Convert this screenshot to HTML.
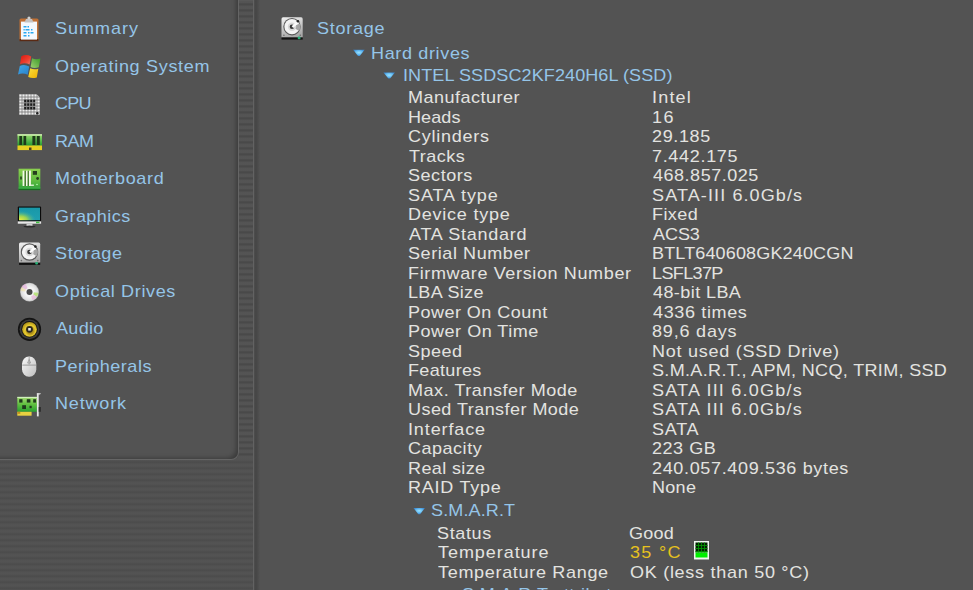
<!DOCTYPE html>
<html><head><meta charset="utf-8">
<style>
html,body{margin:0;padding:0}
body{width:973px;height:590px;overflow:hidden;position:relative;
 background:repeating-linear-gradient(to bottom,#4b4b4b 0px,#4e4e4e 1px,#525252 2px,#535353 4px,#505050 5px,#4c4c4c 6px);
 font-family:"Liberation Sans",sans-serif;}
.a{position:absolute}
#strip{left:238px;top:0;width:16px;height:459px;background:repeating-linear-gradient(to bottom,#535353 0px,#545454 1px,#545454 2px,#535353 3px,#4c4c4c 3.5px,#494949 4.5px,#4e4e4e 5.5px,#535353 6px)}
#stripTop{left:238px;top:0;width:16px;height:1px;background:#585858}
#panelL{left:-20px;top:-20px;width:259px;height:480px;background:#656565;border-radius:0 8px 8px 0}
#panelIn{left:-20px;top:-20px;width:258px;height:479px;background:#535353;border-radius:0 8px 7px 0;box-shadow:inset -4px -3px 4px -2px rgba(0,0,0,0.28)}
#vline{left:253px;top:0;width:1px;height:590px;background:#626262}
#content{left:254px;top:0;width:719px;height:590px;background:#535353}
#shade{left:254px;top:0;width:6px;height:590px;background:linear-gradient(to right,#4f4f4f,#454545 30%,#4a4a4a 60%,#535353)}
.t{position:absolute;white-space:nowrap;font-size:17px;line-height:20px;transform-origin:0 0;transform:scaleX(1.06)}
.b{color:#95c5e8}
.w{color:#e3e3e0}
.y{color:#e6c21e}
</style></head><body>
<div class="a" id="strip"></div>
<div class="a" id="stripTop"></div>
<div class="a" id="panelL"></div>
<div class="a" id="panelIn"></div>
<div class="a" id="vline"></div>
<div class="a" id="content"></div>
<div class="a" id="shade"></div>

<svg class="a" style="left:0;top:0" width="973" height="590" viewBox="0 0 973 590">
<defs>
 <linearGradient id="gSilver" x1="0" y1="0" x2="0" y2="1"><stop offset="0" stop-color="#f4f4f4"/><stop offset="1" stop-color="#9a9a9a"/></linearGradient>
 <linearGradient id="gGreen" x1="0" y1="0" x2="0" y2="1"><stop offset="0" stop-color="#9fe070"/><stop offset="1" stop-color="#209a30"/></linearGradient>
 <linearGradient id="gScreen" x1="0" y1="1" x2="1" y2="0"><stop offset="0" stop-color="#e8e830"/><stop offset="0.35" stop-color="#60c060"/><stop offset="0.6" stop-color="#109898"/><stop offset="1" stop-color="#1878a8"/></linearGradient>
 <radialGradient id="gDisc" cx="0.5" cy="0.5" r="0.5"><stop offset="0.3" stop-color="#ffffff"/><stop offset="1" stop-color="#dadada"/></radialGradient>
 <linearGradient id="gMouse" x1="0" y1="0" x2="1" y2="1"><stop offset="0" stop-color="#fafafa"/><stop offset="1" stop-color="#bdbdbd"/></linearGradient>
 <radialGradient id="gYel" cx="0.55" cy="0.6" r="0.6"><stop offset="0.35" stop-color="#b09018"/><stop offset="0.6" stop-color="#e8cc30"/><stop offset="1" stop-color="#a88c18"/></radialGradient>
 <pattern id="pChk" width="2" height="2" patternUnits="userSpaceOnUse"><rect width="2" height="2" fill="#9c9c9c"/><rect width="1" height="1" fill="#f0f0f0"/><rect x="1" y="1" width="1" height="1" fill="#f0f0f0"/></pattern>
 <linearGradient id="gBox" x1="0" y1="0" x2="0.3" y2="1"><stop offset="0" stop-color="#f2f2f2"/><stop offset="0.6" stop-color="#c4c4c4"/><stop offset="1" stop-color="#a8a8a8"/></linearGradient>
 <g id="hdd">
  <rect x="0" y="0" width="21.2" height="21" rx="1.6" fill="url(#gBox)"/>
  <circle cx="10.5" cy="9.4" r="8.7" fill="#5a5a5a"/>
  <circle cx="10.5" cy="9.4" r="7.6" fill="#f4f4f4"/>
  <path d="M10.5,9.4 L18.3,6.2 A8.2,8.2 0 0 1 17.6,13.6 Z" fill="#a4a4a4"/>
  <circle cx="10.5" cy="9.4" r="4.2" fill="#d8d8d8"/>
  <circle cx="10.5" cy="9.4" r="2.3" fill="#383838"/>
  <path d="M11,9.8 L16.4,4.6" stroke="#fcfcfc" stroke-width="2.4"/>
  <circle cx="16.4" cy="4" r="1.3" fill="#262626"/>
  <circle cx="2.4" cy="18" r="0.8" fill="#6a6a6a"/>
  <circle cx="18.8" cy="18" r="0.8" fill="#6a6a6a"/>
  <rect x="0" y="20" width="21.2" height="2.3" fill="#121212"/>
  <rect x="16.2" y="19.3" width="2.8" height="2.6" rx="1" fill="#28b078"/>
 </g>
</defs>

<!-- Summary clipboard -->
<rect x="19.5" y="18.5" width="19" height="22.5" rx="1.5" fill="#c07034"/>
<rect x="19.5" y="39" width="19" height="2.2" fill="#5a2a14"/>
<rect x="21" y="21.6" width="16" height="18" fill="#f4f8fc"/>
<path d="M24.5,22.5 L26,19 L32,19 L33.5,22.5 Z" fill="#c4c4c4"/>
<circle cx="29" cy="18" r="1.6" fill="#d0d0d0"/>
<g fill="#28a8f0">
 <rect x="23.5" y="26" width="3" height="1.5"/><rect x="27.5" y="26" width="1.5" height="1.5"/>
 <rect x="23.5" y="29" width="1.2" height="1.5"/><rect x="25.5" y="29" width="4" height="1.5"/><rect x="31" y="29" width="1.5" height="1.5"/>
 <rect x="23.5" y="32" width="3" height="1.5"/><rect x="28" y="32" width="1.5" height="1.5"/><rect x="30.5" y="32" width="3" height="1.5"/>
 <rect x="23.5" y="35" width="3" height="1.5"/><rect x="28" y="35" width="1.5" height="1.5"/>
</g>

<!-- OS windows flag -->
<defs>
<linearGradient id="gR" x1="0" y1="0" x2="1" y2="1"><stop offset="0" stop-color="#d81810"/><stop offset="0.6" stop-color="#f04030"/><stop offset="1" stop-color="#e88070"/></linearGradient>
<linearGradient id="gG" x1="1" y1="0" x2="0" y2="1"><stop offset="0" stop-color="#3a9a28"/><stop offset="1" stop-color="#9cd070"/></linearGradient>
<linearGradient id="gB" x1="0" y1="0" x2="1" y2="1"><stop offset="0" stop-color="#40a8e8"/><stop offset="1" stop-color="#2a80c8"/></linearGradient>
<linearGradient id="gY" x1="0" y1="0" x2="1" y2="1"><stop offset="0" stop-color="#f8e040"/><stop offset="1" stop-color="#f0b000"/></linearGradient>
</defs>
<path d="M21.3,56.2 Q26,53.6 31.2,56.4 L29.6,64.6 Q25,62.2 20,64.2 Z" fill="url(#gR)"/>
<path d="M32,58.2 Q36,60 40.4,58.4 L38.8,67.2 Q34.4,68.8 30.6,67 Z" fill="url(#gG)"/>
<path d="M19.8,65.9 Q24.5,63.8 29.2,66.6 L27.7,74.8 Q23,72.4 18,74.4 Z" fill="url(#gB)"/>
<path d="M30.2,68.3 Q34,70.1 38.3,68.8 L36.8,77.4 Q32.5,79 28.2,77 Z" fill="url(#gY)"/>
<!-- CPU -->
<defs><pattern id="pPin" x="19" y="94" width="3" height="3" patternUnits="userSpaceOnUse"><rect width="3" height="3" fill="#989898"/><circle cx="1.5" cy="1.5" r="1.05" fill="#eeeeee"/></pattern></defs>
<rect x="19" y="94" width="21" height="21" fill="url(#pPin)"/>
<rect x="23.6" y="99.2" width="11.8" height="10.8" fill="#8a8a8a"/>
<g fill="#1c1c1c">
<rect x="24.2" y="99.8" width="2" height="2.4"/><rect x="27.2" y="99.8" width="2" height="2.4"/><rect x="30.2" y="99.8" width="2" height="2.4"/><rect x="33.2" y="99.8" width="2" height="2.4"/>
<rect x="24.2" y="103.4" width="2" height="2.4"/><rect x="27.2" y="103.4" width="2" height="2.4"/><rect x="30.2" y="103.4" width="2" height="2.4"/><rect x="33.2" y="103.4" width="2" height="2.4"/>
<rect x="24.2" y="107" width="2" height="2.4"/><rect x="27.2" y="107" width="2" height="2.4"/><rect x="30.2" y="107" width="2" height="2.4"/><rect x="33.2" y="107" width="2" height="2.4"/>
</g>
<path d="M36.5,94 L40,94 L40,97.5 Z" fill="#505050"/>
<circle cx="37.3" cy="113.2" r="1.2" fill="#202020"/>
<!-- RAM -->
<rect x="17.5" y="134.3" width="24.5" height="11.5" fill="url(#gGreen)"/>
<rect x="17.5" y="134.3" width="24.5" height="1.2" fill="#d8f0c0"/>
<g fill="#1e3a1a"><rect x="19.3" y="136" width="2.8" height="9"/><rect x="23.5" y="136" width="2.7" height="9"/><rect x="32.4" y="136" width="3" height="9"/><rect x="36.8" y="136" width="3" height="9"/></g>
<rect x="17.5" y="145.5" width="24.5" height="4.6" fill="#e6d020"/>
<rect x="29" y="147.5" width="2.5" height="2.6" fill="#4a4020"/>

<!-- Motherboard -->
<defs><linearGradient id="gMB" x1="0" y1="0" x2="0" y2="1"><stop offset="0" stop-color="#8cd050"/><stop offset="0.55" stop-color="#60bc40"/><stop offset="1" stop-color="#28a038"/></linearGradient>
<linearGradient id="gScr" x1="0" y1="0" x2="0" y2="1"><stop offset="0" stop-color="#1898a8"/><stop offset="1" stop-color="#20a0b0"/></linearGradient>
<radialGradient id="gScrY" cx="0.05" cy="1" r="0.75"><stop offset="0" stop-color="#f0f040"/><stop offset="0.45" stop-color="#a8d848" stop-opacity="0.9"/><stop offset="1" stop-color="#40b0a0" stop-opacity="0"/></radialGradient></defs>
<rect x="18.6" y="168.7" width="21.7" height="21.4" fill="url(#gMB)"/>
<g fill="#f4fae8"><rect x="22.6" y="170.6" width="2" height="15.4"/><rect x="25.9" y="170.6" width="1.8" height="15.4"/><rect x="28.9" y="170.6" width="2" height="15.4"/></g>
<g fill="#3e6a2a" opacity="0.8"><rect x="24.6" y="171" width="1.3" height="15"/><rect x="27.7" y="171" width="1.2" height="15"/></g>
<rect x="30.9" y="184.6" width="3" height="1.2" fill="#f4fae8"/>
<rect x="32.8" y="171" width="4.2" height="3.8" fill="#243e1c"/>
<circle cx="37.6" cy="178.5" r="1.4" fill="#243e1c"/>
<rect x="20.2" y="176.5" width="1.6" height="3" fill="#243e1c"/>
<circle cx="37" cy="184.5" r="0.8" fill="#b8ffb0"/>
<rect x="18.6" y="187" width="21.7" height="1.1" fill="#40a848"/>
<rect x="18.6" y="189" width="21.7" height="1.1" fill="#186a20"/>

<!-- Graphics -->
<rect x="17.8" y="206.4" width="23.3" height="15.2" rx="1" fill="#0a0a0a"/>
<rect x="19" y="207.6" width="21" height="12.6" fill="url(#gScr)"/>
<rect x="19" y="207.6" width="21" height="12.6" fill="url(#gScrY)"/>
<rect x="17.8" y="221.4" width="23.3" height="2.3" fill="#e8e8e8"/>
<rect x="36" y="221.6" width="3.5" height="1.6" fill="#40c040"/>
<rect x="26.5" y="223.7" width="6" height="2.4" fill="#d0d0d0"/>
<ellipse cx="29.5" cy="226.6" rx="6" ry="1" fill="#202020" opacity="0.8"/>

<!-- Storage -->
<use href="#hdd" x="19" y="242.6"/>
<!-- Optical -->
<circle cx="29.5" cy="292.1" r="9.4" fill="#bcbcbc"/>
<circle cx="29.5" cy="292.1" r="8.8" fill="url(#gDisc)"/>
<path d="M29.5,292.1 L21.4,287 A8.8,8.8 0 0 1 25.5,283.8 Z" fill="#e6b0dc" opacity="0.7"/>
<path d="M29.5,292.1 L20.7,291 A8.8,8.8 0 0 1 21.4,287 Z" fill="#f0e0a0" opacity="0.6"/>
<path d="M29.5,292.1 L38.3,292.8 A8.8,8.8 0 0 1 36.8,296.8 Z" fill="#b4e070" opacity="0.85"/>
<path d="M29.5,292.1 L36.8,296.8 A8.8,8.8 0 0 1 32.5,300 Z" fill="#e8b0d8" opacity="0.7"/>
<circle cx="29.5" cy="292.1" r="4.4" fill="#f4f4f4"/>
<circle cx="29.5" cy="292.1" r="3" fill="#4a4a4a"/>

<!-- Audio -->
<circle cx="29.5" cy="329.3" r="11.6" fill="#141414"/>
<circle cx="29.5" cy="329.3" r="9.9" fill="#3c3c3c"/>
<circle cx="29.5" cy="329.3" r="8.2" fill="#121212"/>
<circle cx="29.5" cy="329.3" r="7.4" fill="url(#gYel)"/>
<circle cx="29.5" cy="329.3" r="3.4" fill="#2c2a20"/>
<rect x="28.2" y="328" width="2.6" height="2.6" fill="#e8e8e8"/>

<!-- Mouse -->
<rect x="22" y="356.5" width="14.3" height="20.3" rx="6.8" ry="7.6" fill="url(#gMouse)"/>
<rect x="22.3" y="364.6" width="13.7" height="1" fill="#9a9a9a"/>
<rect x="28.7" y="357" width="0.9" height="7.6" fill="#a0a0a0"/>
<path d="M27.6,363 L29.15,359.5 L30.7,363 Z" fill="none" stroke="#9a9a9a" stroke-width="0.8"/>

<!-- Network -->
<defs><linearGradient id="gNet" x1="0" y1="0" x2="0" y2="1"><stop offset="0" stop-color="#a8dc78"/><stop offset="0.5" stop-color="#60c040"/><stop offset="1" stop-color="#28a030"/></linearGradient></defs>
<rect x="17.3" y="396.9" width="19.6" height="14.9" fill="url(#gNet)"/>
<rect x="17.3" y="396.9" width="19.6" height="1" fill="#d8f0c8"/>
<g fill="#203a1c"><rect x="19.2" y="399.2" width="3.3" height="3.4"/><rect x="26.8" y="399.2" width="3.6" height="3.4"/><rect x="33.2" y="399.2" width="2.8" height="3.4"/><rect x="22.2" y="405.2" width="3.8" height="3.8"/><rect x="29.5" y="405.8" width="2.2" height="2.4"/></g>
<rect x="17.3" y="411.8" width="14.3" height="3.9" fill="#e8d040"/>
<rect x="17.3" y="411.8" width="3" height="2" fill="#c09020"/>
<rect x="36.9" y="393.3" width="1.8" height="23.1" fill="#e8e8e8"/>
<path d="M36.9,393.3 L41,393.3 L40,394.6 L36.9,394.6 Z" fill="#e0e0e0"/>
<rect x="38.7" y="407" width="2.2" height="4.8" fill="#2e2e2e"/>

<!-- header storage icon -->
<use href="#hdd" x="281.5" y="17.3"/>

<!-- triangles -->
<defs><radialGradient id="gTri" cx="0.5" cy="0.45" r="0.55"><stop offset="0" stop-color="#9ae4ff"/><stop offset="0.6" stop-color="#62b8f0"/><stop offset="1" stop-color="#3a88d0"/></radialGradient>
<path id="tri" d="M0,0.2 L11.4,0.2 L6.6,6.4 L4.8,6.4 Z"/></defs>
<use href="#tri" x="353.2" y="49.6" fill="url(#gTri)"/>
<use href="#tri" x="383.5" y="72.2" fill="url(#gTri)"/>
<use href="#tri" x="413.5" y="507.8" fill="url(#gTri)"/>
<!-- temp box -->
<rect x="694" y="541" width="15" height="18.5" fill="#f0f8f0"/>
<rect x="695.5" y="542.5" width="12" height="10" fill="#002000"/>
<g fill="#009000"><rect x="695.5" y="545" width="12" height="0.9"/><rect x="695.5" y="548" width="12" height="0.9"/><rect x="695.5" y="551" width="12" height="0.9"/><rect x="698" y="542.5" width="0.9" height="10"/><rect x="701" y="542.5" width="0.9" height="10"/><rect x="704" y="542.5" width="0.9" height="10"/></g>
<rect x="695.5" y="552.5" width="12" height="5" fill="#00f000"/>
</svg>
<div class="t b" style="left:54.96px;top:19.00px;letter-spacing:0.915px">Summary</div>
<div class="t b" style="left:55.00px;top:57.00px;letter-spacing:0.645px">Operating System</div>
<div class="t b" style="left:54.97px;top:94.00px;letter-spacing:-0.780px">CPU</div>
<div class="t b" style="left:54.64px;top:132.00px;letter-spacing:-0.513px">RAM</div>
<div class="t b" style="left:54.64px;top:169.00px;letter-spacing:0.611px">Motherboard</div>
<div class="t b" style="left:54.97px;top:207.00px;letter-spacing:0.414px">Graphics</div>
<div class="t b" style="left:54.96px;top:244.00px;letter-spacing:0.618px">Storage</div>
<div class="t b" style="left:55.00px;top:282.00px;letter-spacing:0.592px">Optical Drives</div>
<div class="t b" style="left:55.83px;top:319.00px;letter-spacing:0.307px">Audio</div>
<div class="t b" style="left:54.64px;top:357.00px;letter-spacing:0.502px">Peripherals</div>
<div class="t b" style="left:54.64px;top:394.00px;letter-spacing:0.780px">Network</div>
<div class="t b" style="left:317.06px;top:19.00px;letter-spacing:0.697px">Storage</div>
<div class="t b" style="left:371.34px;top:43.50px;letter-spacing:0.610px">Hard drives</div>
<div class="t b" style="left:402.96px;top:66.00px;letter-spacing:0.091px">INTEL SSDSC2KF240H6L (SSD)</div>
<div class="t w" style="left:407.64px;top:88.00px;letter-spacing:0.455px">Manufacturer</div>
<div class="t w" style="left:652.26px;top:88.00px;letter-spacing:1.127px">Intel</div>
<div class="t w" style="left:407.64px;top:107.50px;letter-spacing:0.098px">Heads</div>
<div class="t w" style="left:651.73px;top:107.50px;letter-spacing:1.333px">16</div>
<div class="t w" style="left:407.97px;top:127.00px;letter-spacing:0.693px">Cylinders</div>
<div class="t w" style="left:651.99px;top:127.00px;letter-spacing:0.598px">29.185</div>
<div class="t w" style="left:408.72px;top:146.50px;letter-spacing:0.467px">Tracks</div>
<div class="t w" style="left:651.99px;top:146.50px;letter-spacing:0.635px">7.442.175</div>
<div class="t w" style="left:407.96px;top:166.00px;letter-spacing:0.498px">Sectors</div>
<div class="t w" style="left:652.70px;top:166.00px;letter-spacing:0.479px">468.857.025</div>
<div class="t w" style="left:407.96px;top:185.50px;letter-spacing:0.863px">SATA type</div>
<div class="t w" style="left:651.96px;top:185.50px;letter-spacing:1.044px">SATA-III 6.0Gb/s</div>
<div class="t w" style="left:407.64px;top:205.00px;letter-spacing:0.715px">Device type</div>
<div class="t w" style="left:651.64px;top:205.00px;letter-spacing:0.394px">Fixed</div>
<div class="t w" style="left:408.83px;top:224.50px;letter-spacing:0.677px">ATA Standard</div>
<div class="t w" style="left:652.83px;top:224.50px;letter-spacing:-0.071px">ACS3</div>
<div class="t w" style="left:407.96px;top:244.00px;letter-spacing:0.535px">Serial Number</div>
<div class="t w" style="left:651.64px;top:244.00px;letter-spacing:0.135px">BTLT640608GK240CGN</div>
<div class="t w" style="left:407.64px;top:263.50px;letter-spacing:0.589px">Firmware Version Number</div>
<div class="t w" style="left:651.64px;top:263.50px;letter-spacing:-0.588px">LSFL37P</div>
<div class="t w" style="left:407.64px;top:283.00px;letter-spacing:0.310px">LBA Size</div>
<div class="t w" style="left:652.70px;top:283.00px;letter-spacing:0.388px">48-bit LBA</div>
<div class="t w" style="left:407.64px;top:302.50px;letter-spacing:0.433px">Power On Count</div>
<div class="t w" style="left:652.70px;top:302.50px;letter-spacing:0.599px">4336 times</div>
<div class="t w" style="left:407.64px;top:322.00px;letter-spacing:0.479px">Power On Time</div>
<div class="t w" style="left:652.00px;top:322.00px;letter-spacing:0.763px">89,6 days</div>
<div class="t w" style="left:407.96px;top:341.50px;letter-spacing:0.448px">Speed</div>
<div class="t w" style="left:651.64px;top:341.50px;letter-spacing:0.689px">Not used (SSD Drive)</div>
<div class="t w" style="left:407.64px;top:361.00px;letter-spacing:0.305px">Features</div>
<div class="t w" style="left:651.96px;top:361.00px;letter-spacing:0.310px">S.M.A.R.T., APM, NCQ, TRIM, SSD</div>
<div class="t w" style="left:407.64px;top:380.50px;letter-spacing:0.508px">Max. Transfer Mode</div>
<div class="t w" style="left:651.96px;top:380.50px;letter-spacing:1.140px">SATA III 6.0Gb/s</div>
<div class="t w" style="left:407.70px;top:400.00px;letter-spacing:0.418px">Used Transfer Mode</div>
<div class="t w" style="left:651.96px;top:400.00px;letter-spacing:1.140px">SATA III 6.0Gb/s</div>
<div class="t w" style="left:408.26px;top:419.50px;letter-spacing:0.817px">Interface</div>
<div class="t w" style="left:651.96px;top:419.50px;letter-spacing:0.695px">SATA</div>
<div class="t w" style="left:407.97px;top:439.00px;letter-spacing:0.477px">Capacity</div>
<div class="t w" style="left:651.99px;top:439.00px;letter-spacing:0.501px">223 GB</div>
<div class="t w" style="left:407.64px;top:458.50px;letter-spacing:0.347px">Real size</div>
<div class="t w" style="left:651.99px;top:458.50px;letter-spacing:0.611px">240.057.409.536 bytes</div>
<div class="t w" style="left:407.64px;top:478.00px;letter-spacing:0.710px">RAID Type</div>
<div class="t w" style="left:651.64px;top:478.00px;letter-spacing:0.270px">None</div>
<div class="t b" style="left:431.46px;top:501.00px;letter-spacing:0.107px">S.M.A.R.T</div>
<div class="t w" style="left:437.46px;top:523.50px;letter-spacing:0.594px">Status</div>
<div class="t w" style="left:629.47px;top:523.50px;letter-spacing:0.243px">Good</div>
<div class="t w" style="left:438.22px;top:543.00px;letter-spacing:0.879px">Temperature</div>
<div class="t y" style="left:629.50px;top:543.00px;letter-spacing:1.217px">35 °C</div>
<div class="t w" style="left:438.22px;top:562.50px;letter-spacing:0.639px">Temperature Range</div>
<div class="t w" style="left:629.50px;top:562.50px;letter-spacing:0.673px">OK (less than 50 °C)</div>
<div class="t b" style="left:462.46px;top:585.00px;letter-spacing:0.350px">S.M.A.R.T attributes</div>
</body></html>
